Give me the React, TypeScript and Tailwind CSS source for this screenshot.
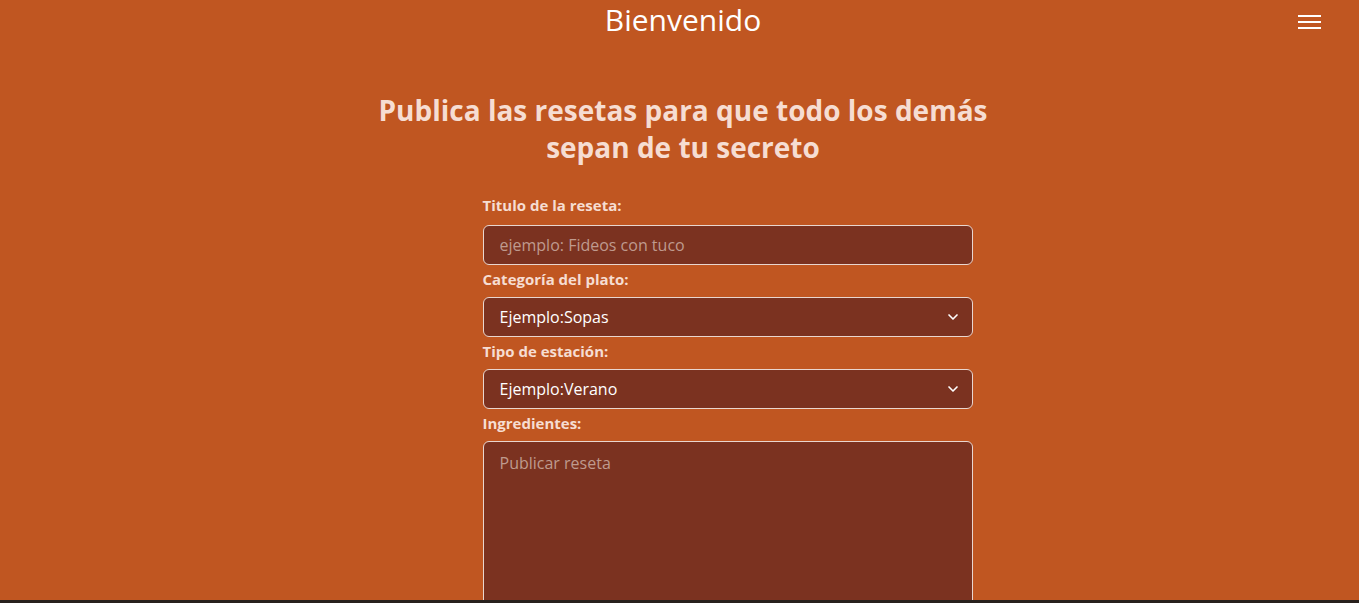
import { ChevronDown } from "lucide-react";

function Label({ text, first }: { text: string; first?: boolean }) {
  return (
    <label
      className={`block text-[15px] font-bold leading-6 text-[#f6ddd2] ${first ? "pb-[8px]" : "pt-[2px] pb-[6px]"}`}
    >
      {text}
    </label>
  );
}

function FakeSelect({ value }: { value: string }) {
  return (
    <div className="relative">
      <select
        defaultValue={value}
        className="w-full h-10 appearance-none rounded-md border border-[#e9d6cf] bg-[#7b3220] pl-4 pr-10 text-[16px] text-white outline-none"
      >
        <option>{value}</option>
      </select>
      <ChevronDown
        size={16}
        strokeWidth={2.5}
        className="absolute right-[12px] top-1/2 -translate-y-1/2 text-white pointer-events-none"
      />
    </div>
  );
}

export default function App() {
  return (
    <div
      className="min-h-screen bg-[#c05621]"
      style={{ fontFamily: '"Open Sans", "Noto Sans", sans-serif' }}
    >
      {/* Header */}
      <header className="relative flex items-center justify-center h-10 pl-[7px]">
        <h1 className="text-[30px] leading-10 text-white font-normal">Bienvenido</h1>
        <button className="absolute right-[38px] top-[15px] flex flex-col gap-[4px]">
          <span className="block w-[23px] h-[2px] bg-white" />
          <span className="block w-[23px] h-[2px] bg-white" />
          <span className="block w-[23px] h-[2px] bg-white" />
        </button>
      </header>

      <main className="flex flex-col items-center pl-[7px]">
        <h2 className="mt-[52px] w-[640px] text-center text-[28px] font-bold leading-[37px] text-[#f6ddd2]">
          Publica las resetas para que todo los demás sepan de tu secreto
        </h2>

        <form
          onSubmit={(e) => e.preventDefault()}
          className="mt-[27px] ml-[89px] w-[490px] flex flex-col"
        >
          <Label text="Titulo de la reseta:" first />
          <input
            type="text"
            placeholder="ejemplo: Fideos con tuco"
            className="h-10 rounded-md border border-[#e9d6cf] bg-[#7b3220] px-4 text-[16px] text-white placeholder:text-[#bf9a8e] outline-none"
          />

          <Label text="Categoría del plato:" />
          <FakeSelect value="Ejemplo:Sopas" />

          <Label text="Tipo de estación:" />
          <FakeSelect value="Ejemplo:Verano" />

          <Label text="Ingredientes:" />
          <textarea
            placeholder="Publicar reseta"
            className="h-[200px] resize-none rounded-md border border-[#e9d6cf] bg-[#7b3220] px-4 py-[9px] text-[16px] text-white placeholder:text-[#bf9a8e] outline-none"
          />
        </form>
      </main>

      <div className="fixed bottom-0 left-0 right-0 h-[3px] bg-[#28201c]" />
    </div>
  );
}
